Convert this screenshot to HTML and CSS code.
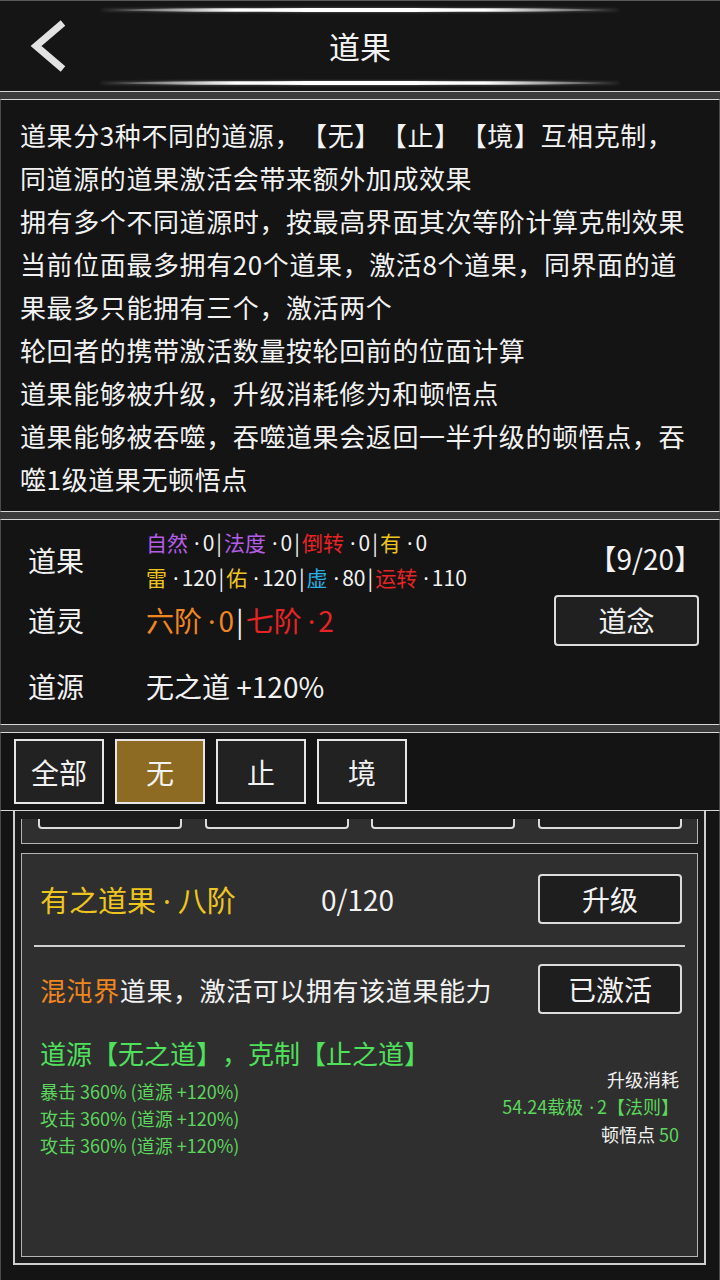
FILE: index.html
```html
<!DOCTYPE html>
<html lang="zh-CN">
<head>
<meta charset="utf-8">
<title>道果</title>
<link rel="stylesheet" href="styles.css">
</head>
<body>
<header class="header">
  <div class="deco"></div>
  <div class="nav">
    <div class="back">
      <svg width="40" height="56" viewBox="0 0 40 56"><polyline points="36,5 9,28 36,51" fill="none" stroke="#e2e2e2" stroke-width="7" stroke-linejoin="miter"/></svg>
    </div>
    <div class="title">道果</div>
    <div></div>
  </div>
  <div class="deco deco-bottom"></div>
</header>

<section class="panel info">
  <p class="info-text">道果分3种不同的道源，【无】【止】【境】互相克制，<br>同道源的道果激活会带来额外加成效果<br>拥有多个不同道源时，按最高界面其次等阶计算克制效果<br>当前位面最多拥有20个道果，激活8个道果，同界面的道<br>果最多只能拥有三个，激活两个<br>轮回者的携带激活数量按轮回前的位面计算<br>道果能够被升级，升级消耗修为和顿悟点<br>道果能够被吞噬，吞噬道果会返回一半升级的顿悟点，吞<br>噬1级道果无顿悟点</p>
</section>

<section class="panel stats">
  <div class="stat-row row1">
    <div class="label">道果</div>
    <div class="content small">
      <div><span class="purple">自然</span><span class="dot">·</span>0<span class="sep">|</span><span class="purple">法度</span><span class="dot">·</span>0<span class="sep">|</span><span class="red">倒转</span><span class="dot">·</span>0<span class="sep">|</span><span class="yellow">有</span><span class="dot">·</span>0</div>
      <div><span class="yellow">雷</span><span class="dot">·</span>120<span class="sep">|</span><span class="yellow">佑</span><span class="dot">·</span>120<span class="sep">|</span><span class="cyan">虚</span><span class="dot">·</span>80<span class="sep">|</span><span class="red">运转</span><span class="dot">·</span>110</div>
    </div>
    <div class="right count">【9/20】</div>
  </div>
  <div class="stat-row row2">
    <div class="label">道灵</div>
    <div class="content big"><span class="orange">六阶<span class="dot">·</span>0</span><span class="sep">|</span><span class="red">七阶<span class="dot">·</span>2</span></div>
    <div class="right"><div class="btn btn-wide">道念</div></div>
  </div>
  <div class="stat-row row3">
    <div class="label">道源</div>
    <div class="content big">无之道 +120%</div>
    <div class="right"></div>
  </div>
</section>

<section class="panel tabs">
  <div class="tab">全部</div>
  <div class="tab tab-active">无</div>
  <div class="tab">止</div>
  <div class="tab">境</div>
</section>

<section class="list">
  <div class="frame">
    <div class="viewport">
      <div class="card card-prev">
        <div class="btn btn-small"></div>
        <div class="btn btn-small"></div>
        <div class="btn btn-small"></div>
        <div class="btn btn-small"></div>
      </div>
      <div class="card card-main">
        <div class="crow first">
          <div class="name yellow">有之道果<span class="dot dot-wide">·</span>八阶</div>
          <div class="num">0/120</div>
          <div class="spacer"></div>
          <div class="btn btn-card">升级</div>
        </div>
        <div class="divider"></div>
        <div class="crow second">
          <div class="desc"><span class="orange">混沌界</span>道果，激活可以拥有该道果能力</div>
          <div class="spacer"></div>
          <div class="btn btn-card">已激活</div>
        </div>
        <div class="source">道源【无之道】，克制【止之道】</div>
        <div class="effects">
          <div class="eff-left">
            <div>暴击 360% (道源 +120%)</div>
            <div>攻击 360% (道源 +120%)</div>
            <div>攻击 360% (道源 +120%)</div>
          </div>
          <div class="eff-right">
            <div>升级消耗</div>
            <div class="green">54.24载极<span class="dot">·</span>2【法则】</div>
            <div>顿悟点 <span class="green">50</span></div>
          </div>
        </div>
      </div>
    </div>
  </div>
</section>
</body>
</html>
```

FILE: styles.css
```css
* { box-sizing: border-box; }
html, body { margin: 0; padding: 0; }
body {
  width: 720px;
  height: 1280px;
  overflow: hidden;
  background: #3b3b3b;
  font-family: "Noto Sans CJK SC", "Noto Sans", sans-serif;
  color: #f2f2f2;
  text-spacing-trim: space-all;
}
.dot { font-family: "Noto Sans", "DejaVu Sans", sans-serif; margin: 0 3px 0 6px; }
.dot-wide { margin: 0 7px 0 7px; }

/* header */
.header {
  height: 92px;
  background: #151515;
  border-top: 1px solid #5a5a5a;
  border-bottom: 1px solid #d6d6d6;
  padding-top: 7px;
}
.deco {
  width: 520px;
  height: 4px;
  margin: 0 auto;
  border-radius: 50%;
  background: linear-gradient(90deg, rgba(255,255,255,0) 0%, rgba(190,190,190,0.55) 8%, #ffffff 26%, #ffffff 74%, rgba(190,190,190,0.55) 92%, rgba(255,255,255,0) 100%);
  box-shadow: 0 0 3px rgba(255,255,255,0.35);
}
.deco-bottom { margin-top: 1px; }
.nav {
  height: 68px;
  display: grid;
  grid-template-columns: 100px 1fr 100px;
  align-items: center;
}
.back { padding-left: 27px; display: flex; align-items: center; }
.title { text-align: center; font-size: 31px; line-height: 40px; }

/* panels */
.panel {
  margin-top: 7px;
  background: #141414;
  border-top: 1px solid #d6d6d6;
  border-bottom: 1px solid #d6d6d6;
  border-left: 1px solid #4a4a4a;
  border-right: 1px solid #4a4a4a;
}

.info {
  height: 413px;
  padding: 13px 20px 0 19px;
}
.info-text {
  margin: 0;
  font-size: 26px;
  line-height: 43px;
  letter-spacing: 0.6px;
  white-space: nowrap;
}

/* stats */
.stats {
  height: 206px;
  padding: 6px 20px 0 27px;
}
.stat-row { display: flex; align-items: center; }
.row1 { height: 68px; }
.row2 { height: 52px; }
.row3 { height: 52px; margin-top: 14px; }
.label { width: 118px; font-size: 28px; }
.content { flex: 1; }
.small { font-size: 21px; line-height: 34px; }
.big { font-size: 28px; }
.sep { color: #f2f2f2; margin: 0 2px; }
.right { width: 145px; display: flex; justify-content: flex-end; }
.count { font-size: 28px; margin-right: -3px; margin-top: -4px; }

.purple { color: #b45de6; }
.red { color: #e62424; }
.yellow { color: #eec51e; }
.cyan { color: #2caee2; }
.orange { color: #f0861f; }
.green { color: #5cd65c; }

.btn {
  border: 2px solid #dcdcdc;
  border-radius: 4px;
  background: #202020;
  display: flex;
  align-items: center;
  justify-content: center;
  font-size: 28px;
  color: #f2f2f2;
}
.btn-wide { width: 145px; height: 51px; }

/* tabs */
.tabs {
  height: 79px;
  padding: 6px 13px 0;
  display: flex;
  align-items: flex-start;
  gap: 11px;
}
.tab {
  width: 90px;
  height: 65px;
  border: 2px solid #e6e6e6;
  background: #222222;
  display: flex;
  align-items: center;
  justify-content: center;
  font-size: 28px;
}
.tab-active { background: #8d6b22; }

/* list */
.list {
  height: 470px;
  background: #141414;
  border-left: 1px solid #4a4a4a;
  border-right: 1px solid #4a4a4a;
  border-bottom: 1px solid #5a5a5a;
  padding: 0 13px 0 12px;
}
.frame {
  border: 2px solid #cfcfcf;
  border-top: none;
  background: #1b1b1b;
  padding: 8px 6px 6px;
}
.viewport { height: 438px; overflow: hidden; }
.card {
  background: #2f2f2f;
  border: 1px solid #b4b4b4;
}
.card-prev {
  height: 90px;
  margin-top: -65px;
  display: flex;
  align-items: flex-end;
  justify-content: space-between;
  padding: 0 15px 14px 16px;
}
.btn-small { width: 144px; height: 50px; background: #1d1d1d; }

.card-main {
  margin-top: 9px;
  height: 404px;
  padding: 0 12px;
}
.crow {
  display: flex;
  align-items: center;
  height: 50px;
  padding-left: 6px;
  padding-right: 3px;
}
.crow.first { margin-top: 20px; }
.crow.second { margin-top: 17px; }
.name { width: 281px; font-size: 29px; white-space: nowrap; }
.num { font-size: 28px; }
.spacer { flex: 1; }
.btn-card { width: 144px; height: 50px; background: #1e1e1e; }
.divider { height: 2px; background: #d0d0d0; margin-top: 21px; }
.desc { font-size: 26px; letter-spacing: 0.6px; white-space: nowrap; }
.source {
  margin-top: 26px;
  padding-left: 6px;
  font-size: 26px;
  line-height: 26px;
  color: #4fe05c;
  white-space: nowrap;
}
.effects { display: flex; justify-content: space-between; }
.eff-left {
  padding-top: 12px;
  padding-left: 6px;
  font-size: 18px;
  line-height: 27px;
  color: #5cd65c;
}
.eff-right {
  padding-right: 6px;
  text-align: right;
  font-size: 18px;
  line-height: 27px;
  color: #f2f2f2;
}
```
